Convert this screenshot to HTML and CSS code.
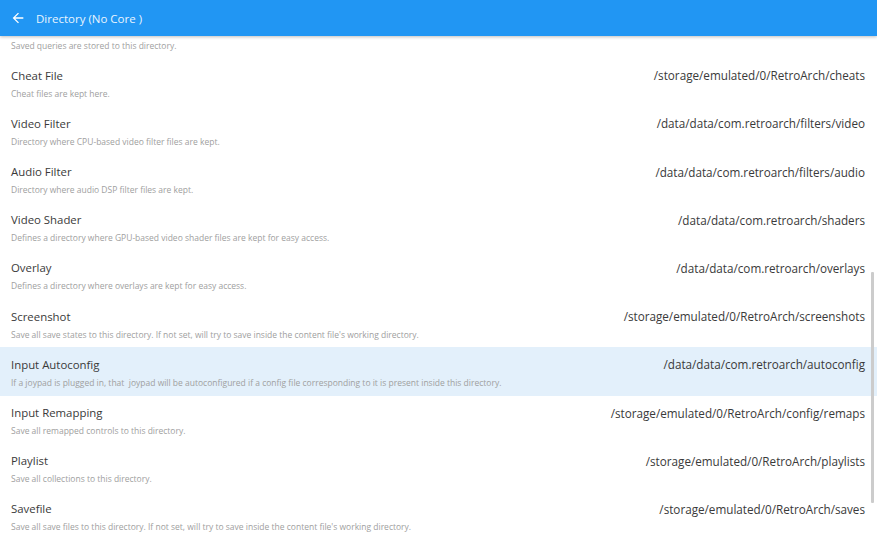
FILE: index.html
```html
<!DOCTYPE html>
<html lang="en">

<head>
    <meta charset="UTF-8">
    <title>Directory (No Core )</title>
    <link rel="stylesheet" href="styles.css">
</head>

<body>
    <!-- top bar -->
    <div class="toolbar">
        <svg class="back" width="16" height="16" viewBox="0 0 24 24">
            <path d="M20 11H7.83l5.59-5.59L12 4l-8 8 8 8 1.41-1.41L7.83 13H20v-2z" fill="#ffffff"/>
        </svg>
        <span class="title">Directory (No Core )</span>
    </div>

    <!-- settings list -->
    <div class="list">
        <div class="items">
            <div class="item">
                <div class="row"></div>
                <div class="desc">Saved queries are stored to this directory.</div>
            </div>
            <div class="item">
                <div class="row"><span class="label">Cheat File</span><span class="value">/storage/emulated/0/RetroArch/cheats</span></div>
                <div class="desc">Cheat files are kept here.</div>
            </div>
            <div class="item">
                <div class="row"><span class="label">Video Filter</span><span class="value">/data/data/com.retroarch/filters/video</span></div>
                <div class="desc">Directory where CPU-based video filter files are kept.</div>
            </div>
            <div class="item">
                <div class="row"><span class="label">Audio Filter</span><span class="value">/data/data/com.retroarch/filters/audio</span></div>
                <div class="desc">Directory where audio DSP filter files are kept.</div>
            </div>
            <div class="item">
                <div class="row"><span class="label">Video Shader</span><span class="value">/data/data/com.retroarch/shaders</span></div>
                <div class="desc">Defines a directory where GPU-based video shader files are kept for easy access.</div>
            </div>
            <div class="item">
                <div class="row"><span class="label">Overlay</span><span class="value">/data/data/com.retroarch/overlays</span></div>
                <div class="desc">Defines a directory where overlays are kept for easy access.</div>
            </div>
            <div class="item">
                <div class="row"><span class="label">Screenshot</span><span class="value">/storage/emulated/0/RetroArch/screenshots</span></div>
                <div class="desc">Save all save states to this directory. If not set, will try to save inside the content file's working directory.</div>
            </div>
            <div class="item selected">
                <div class="row"><span class="label">Input Autoconfig</span><span class="value">/data/data/com.retroarch/autoconfig</span></div>
                <div class="desc">If a joypad is plugged in, that &nbsp;joypad will be autoconfigured if a config file corresponding to it is present inside this directory.</div>
            </div>
            <div class="item">
                <div class="row"><span class="label">Input Remapping</span><span class="value">/storage/emulated/0/RetroArch/config/remaps</span></div>
                <div class="desc">Save all remapped controls to this directory.</div>
            </div>
            <div class="item">
                <div class="row"><span class="label">Playlist</span><span class="value">/storage/emulated/0/RetroArch/playlists</span></div>
                <div class="desc">Save all collections to this directory.</div>
            </div>
            <div class="item">
                <div class="row"><span class="label">Savefile</span><span class="value">/storage/emulated/0/RetroArch/saves</span></div>
                <div class="desc">Save all save files to this directory. If not set, will try to save inside the content file's working directory.</div>
            </div>
        </div>
        <div class="scrollbar"></div>
    </div>
</body>

</html>
```

FILE: styles.css
```css
* {
    margin: 0;
    padding: 0;
    box-sizing: border-box;
}

body {
    width: 877px;
    height: 548px;
    overflow: hidden;
    background: #ffffff;
    font-family: "Open Sans", "Noto Sans", sans-serif;
}

/* 顶部栏 */
.toolbar {
    position: relative;
    z-index: 2;
    height: 36px;
    display: flex;
    align-items: center;
    background-color: #2196f3;
    box-shadow: 0 1px 3px rgba(0, 0, 0, 0.25);
}

.back {
    margin-left: 10px;
    margin-right: 10px;
}

.title {
    color: #ffffff;
    font-size: 11.5px;
    opacity: 0.9;
}

/* 列表 */
.list {
    position: relative;
    height: 512px;
    overflow: hidden;
}

.items {
    margin-top: -26px;
}

.item {
    height: 48.2px;
    padding: 8px 12px 0 11px;
}

.item.selected {
    background-color: #e3f0fb;
}

.row {
    display: flex;
    justify-content: space-between;
    align-items: center;
    height: 18px;
}

.label,
.value {
    font-size: 11.7px;
    color: #3a3a3a;
}

.label {
    font-size: 11.4px;
}

.desc {
    margin-top: 2.5px;
    font-size: 8.5px;
    line-height: 14px;
    color: #a0a0a0;
    white-space: nowrap;
}

.scrollbar {
    position: absolute;
    right: 3px;
    top: 236px;
    width: 3px;
    height: 231px;
    background-color: #cccccc;
    border-radius: 1px;
}
```
